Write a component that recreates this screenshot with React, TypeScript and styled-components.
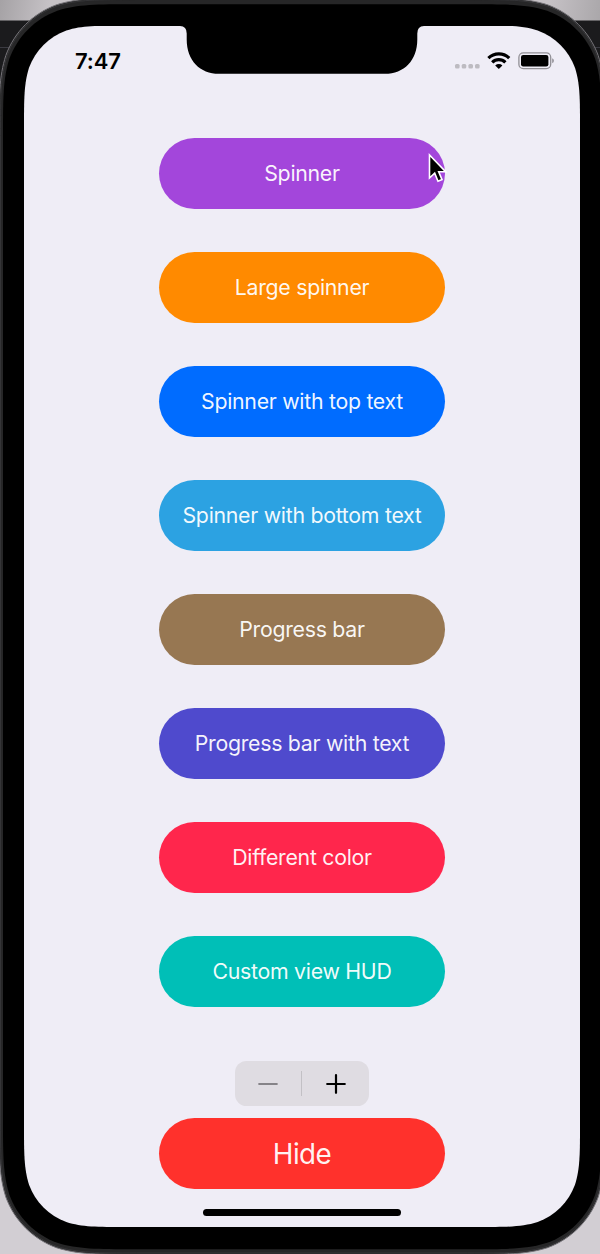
import React from "react";
import styled, { createGlobalStyle } from "styled-components";

const Global = createGlobalStyle`
  *, *::before, *::after { box-sizing: border-box; }
  body { margin: 0; background: #c9c5ca; font-family: Inter, "Liberation Sans", sans-serif; }
`;

/* Rounded rectangle with continuous (smooth) corners, as an SVG path string. */
const smoothRect = (x: number, y: number, w: number, h: number, r: number) => {
  const R = x + w;
  const B = y + h;
  const a = 1.5287 * r, b = 1.0885 * r, c = 0.8684 * r, d = 0.6315 * r;
  const e = 0.0749 * r, f = 0.3728 * r, g = 0.1691 * r;
  return [
    `M${x + a} ${y}H${R - a}`,
    `C${R - b} ${y} ${R - c} ${y} ${R - d} ${y + e}`,
    `C${R - f} ${y + g} ${R - g} ${y + f} ${R - e} ${y + d}`,
    `C${R} ${y + c} ${R} ${y + b} ${R} ${y + a}`,
    `V${B - a}`,
    `C${R} ${B - b} ${R} ${B - c} ${R - e} ${B - d}`,
    `C${R - g} ${B - f} ${R - f} ${B - g} ${R - d} ${B - e}`,
    `C${R - c} ${B} ${R - b} ${B} ${R - a} ${B}`,
    `H${x + a}`,
    `C${x + b} ${B} ${x + c} ${B} ${x + d} ${B - e}`,
    `C${x + f} ${B - g} ${x + g} ${B - f} ${x + e} ${B - d}`,
    `C${x} ${B - c} ${x} ${B - b} ${x} ${B - a}`,
    `V${y + a}`,
    `C${x} ${y + b} ${x} ${y + c} ${x + e} ${y + d}`,
    `C${x + g} ${y + f} ${x + f} ${y + g} ${x + d} ${y + e}`,
    `C${x + c} ${y} ${x + b} ${y} ${x + a} ${y}Z`,
  ].join("");
};

const Desktop = styled.div`
  position: relative;
  width: 600px;
  height: 1254px;
  overflow: hidden;
  padding: 25.5px 20px 27px 24px;
  background:
    linear-gradient(100deg, #a5a2a5, #c6c2c6 50px, #c6c2c6 540px, #aaa7aa) 0 0 / 600px 20.5px no-repeat,
    linear-gradient(#1b1b1d 0 47px, #3b3b42 47px 48px, #1b1b1d 48px 1130px, #d2ced3 1160px);
`;

const Casing = styled.svg`
  position: absolute;
  inset: 0;
`;

const Screen = styled.main`
  position: relative;
  display: flex;
  flex-direction: column;
  align-items: center;
  width: 556px;
  height: 1201.5px;
  background: #efedf6;
  clip-path: path("${smoothRect(0, 0, 556, 1201.5, 67)}");
`;

const StatusBar = styled.header`
  display: flex;
  justify-content: space-between;
  align-items: flex-start;
  width: 100%;
  height: 112.5px;
  flex: none;
  padding: 21.3px 26px 0 51px;
`;

const Clock = styled.time`
  font-size: 22px;
  line-height: 28px;
  font-weight: 600;
  letter-spacing: -0.1px;
  color: #000;
`;

const Notch = styled.svg`
  position: absolute;
  top: -1px;
  left: 154px;
`;

const StatusIcons = styled.svg`
  flex: none;
  display: block;
`;

const ButtonStack = styled.div`
  display: flex;
  flex-direction: column;
  gap: 43px;
`;

const Pill = styled.button<{ $color: string; $large?: boolean }>`
  display: flex;
  align-items: center;
  justify-content: center;
  width: 285.5px;
  height: 71px;
  flex: none;
  padding: ${(p) => (p.$large ? "1px 0 0" : "0 0 1px")};
  border: 0;
  border-radius: 36px;
  background: ${(p) => p.$color};
  color: rgba(255, 255, 255, 0.94);
  font-family: inherit;
  font-size: ${(p) => (p.$large ? 27.8 : 21.3)}px;
  font-weight: 400;
  letter-spacing: ${(p) => (p.$large ? -0.55 : -0.28)}px;
  white-space: nowrap;
`;

const Stepper = styled.div`
  display: flex;
  align-items: center;
  width: 134px;
  height: 45.3px;
  flex: none;
  margin: 54.2px 0 11.5px;
  border-radius: 11.5px;
  background: #dfdce2;
`;

const StepButton = styled.button`
  display: flex;
  flex: 1;
  align-items: center;
  justify-content: center;
  height: 100%;
  padding: 0;
  border: 0;
  background: none;
`;

const StepDivider = styled.span`
  width: 1px;
  height: 25px;
  margin: 0 1px 0 0;
  background: #c2c0c5;
`;

const HomeIndicator = styled.div`
  width: 198px;
  height: 7.5px;
  flex: none;
  margin-top: 20px;
  border-radius: 4px;
  background: #000;
`;

const Pointer = styled.svg`
  position: absolute;
  left: 426px;
  top: 151px;
`;

const actions = [
  { label: "Spinner", color: "#a346db" },
  { label: "Large spinner", color: "#ff8a00" },
  { label: "Spinner with top text", color: "#006cff" },
  { label: "Spinner with bottom text", color: "#2ca2e2" },
  { label: "Progress bar", color: "#977752" },
  { label: "Progress bar with text", color: "#4f4acd" },
  { label: "Different color", color: "#ff264c" },
  { label: "Custom view HUD", color: "#00bfb7" },
];

export default function App() {
  return (
    <>
      <Global />
      <Desktop>
        <Casing width="600" height="1254" aria-hidden>
          <path d={smoothRect(-1, -2, 606, 1256.5, 91)} fill="#262627" stroke="#77757a" strokeWidth="1" />
          <path d={smoothRect(0.5, -0.5, 603, 1253.5, 89)} fill="#262627" stroke="#3a3a3c" strokeWidth="0.8" />
          <path d={smoothRect(3, 4.3, 598.5, 1245, 86)} fill="#000" />
        </Casing>
        <Screen>
          <StatusBar>
            <Clock>7:47</Clock>
            <StatusIcons width="100" height="24" viewBox="454 47 100 24">
              <g fill="#bdbbc1">
                <rect x="455" y="64" width="4.6" height="4.6" rx="1.5" />
                <rect x="461.7" y="64" width="4.6" height="4.6" rx="1.5" />
                <rect x="468.4" y="64" width="4.6" height="4.6" rx="1.5" />
                <rect x="475" y="64" width="4.6" height="4.6" rx="1.5" />
              </g>
              <g fill="none" stroke="#000" strokeWidth="3.2">
                <path d="M488.4 58.1a14.9 14.9 0 0 1 20.8 0" />
                <path d="M492.2 62.4a9.4 9.4 0 0 1 13.2 0" />
              </g>
              <path d="M495.2 65.4a5.2 5.2 0 0 1 7.2 0L498.8 69Z" />
              <rect x="518.9" y="52.8" width="31.8" height="15.8" rx="4.4" fill="none" stroke="#918f95" strokeWidth="1.3" />
              <rect x="521" y="54.9" width="27.4" height="11.6" rx="2.2" />
              <path d="M552.2 58.2q1.7.7 1.7 2.5t-1.7 2.5z" fill="#918f95" />
            </StatusIcons>
          </StatusBar>
          <Notch width="248" height="50" viewBox="178 24.5 248 50" aria-hidden>
            <path d="M178 24V25.5H180Q186.7 25.5 186.7 33V39C186.7 60 200 73.3 219 73.3H385C404 73.3 417.3 60 417.3 39V33Q417.3 25.5 424 25.5H426V24Z" />
          </Notch>
          <ButtonStack>
            {actions.map((a) => (
              <Pill key={a.label} $color={a.color}>{a.label}</Pill>
            ))}
          </ButtonStack>
          <Stepper>
            <StepButton aria-label="Decrease">
              <svg width="20" height="20" stroke="#858388" strokeWidth="2.2" strokeLinecap="round"><path d="M1.2 10H18.8" /></svg>
            </StepButton>
            <StepDivider />
            <StepButton aria-label="Increase">
              <svg width="20" height="20" stroke="#000" strokeWidth="2.2" strokeLinecap="round"><path d="M1.2 10H18.8M10 1.2V18.8" /></svg>
            </StepButton>
          </Stepper>
          <Pill $color="#ff312c" $large>Hide</Pill>
          <HomeIndicator />
        </Screen>
        <Pointer width="24" height="36" aria-hidden>
          <path d="M3.5 4V27L8.7 22.2L12 30.2L16 28.6L12.7 20.7H19.6Z" fill="#000" stroke="#fff" strokeWidth="1.6" />
        </Pointer>
      </Desktop>
    </>
  );
}
